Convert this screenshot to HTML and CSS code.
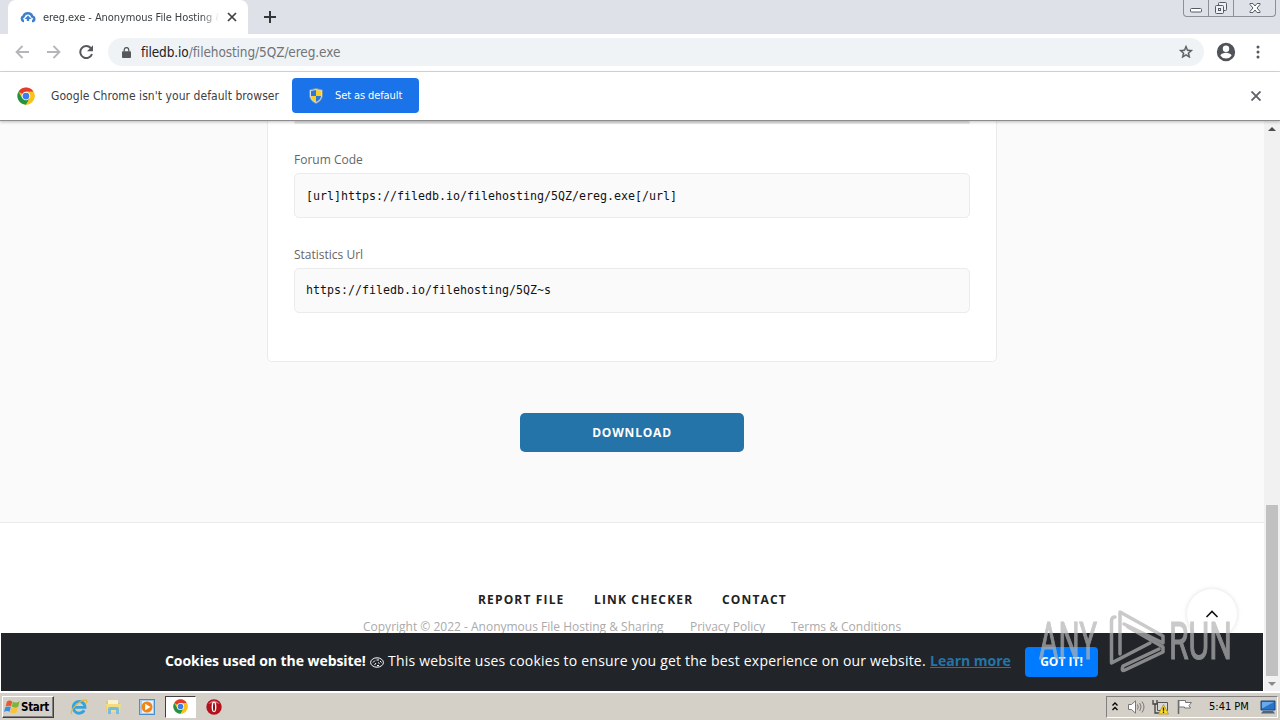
FILE: index.html
```
<!DOCTYPE html>
<html lang="en">
<head>
    <meta charset="UTF-8">
    <meta name="viewport" content="width=device-width, initial-scale=1.0">
    <title>ereg.exe - Anonymous File Hosting &amp; Sharing</title>
    <link rel="stylesheet" href="styles.css">
</head>
<body>
    <svg class="defs" width="0" height="0">
        <symbol id="chrome" viewBox="0 0 48 48">
            <circle cx="24" cy="24" r="23" fill="#fbc116"/>
            <path d="M24 24 4.1 12.5A23 23 0 0 1 43.9 12.5H24z" fill="#e33b2e"/>
            <path d="M4.1 12.5A23 23 0 0 0 24 47l10-17-10-6-10 6z" fill="#229342"/>
            <path d="M24 47A23 23 0 0 0 43.9 12.5H24L34 30z" fill="#fbc116"/>
            <circle cx="24" cy="24" r="11.5" fill="#fff"/>
            <circle cx="24" cy="24" r="9" fill="#3b7ded"/>
        </symbol>
    </svg>

    <div class="tabstrip">
        <div class="tab">
            <svg width="16" height="12" viewBox="0 0 16 12">
                <path d="M4 10H3.500A2.400 2.400 0 0 1 3.400 5.500 4.700 4.700 0 0 1 12.300 5.500a2.400 2.400 0 0 1 .7 4.500H12" fill="none" stroke="#3f7fd0" stroke-width="2.600"/>
                <path d="M8 4.500 4.500 8h2.300v2h2.400V8h2.300z" fill="#3f7fd0"/>
            </svg>
            <span class="tab-title">ereg.exe - Anonymous File Hosting &amp;</span>
            <svg width="10" height="10" viewBox="0 0 10 10"><path d="M1 1l8 8M9 1l-8 8" stroke="#3c4043" stroke-width="1.7"/></svg>
        </div>
        <svg class="new-tab" width="12" height="12" viewBox="0 0 12 12"><path d="M6 0v12M0 6h12" stroke="#35363a" stroke-width="2"/></svg>
        <div class="window-buttons">
            <span><svg width="12" height="16" viewBox="0 0 12 16"><rect x=".5" y="8.5" width="11" height="3.5" rx="1" fill="#fff" stroke="#555b66"/></svg></span>
            <span><svg width="14" height="16" viewBox="0 0 14 16" fill="#eef0f4" stroke="#555b66"><rect x="4.500" y="2.500" width="8" height="8" rx="1"/><rect x="1.500" y="5.500" width="8" height="8" rx="1"/><rect x="4.500" y="8.500" width="2" height="2"/></svg></span>
            <span class="wide"><svg width="12" height="16" viewBox="0 0 12 16"><path d="M1 3.500h3l2 2.500 2-2.500h3v1L8 8l3 3.500v1H8L6 10l-2 2.500H1v-1L4 8 1 4.500z" fill="#fff" stroke="#555b66"/></svg></span>
        </div>
    </div>

    <div class="toolbar">
        <svg width="14" height="14" viewBox="0 0 14 14" fill="none" stroke="#b4b6b9" stroke-width="1.8"><path d="M14 7H1.500M7.500 1l-6 6 6 6"/></svg>
        <svg width="14" height="14" viewBox="0 0 14 14" fill="none" stroke="#b4b6b9" stroke-width="1.800"><path d="M0 7h12.500M6.500 1l6 6-6 6"/></svg>
        <svg width="14" height="14" viewBox="0 0 14 14"><path d="M11.700 3A6 6 0 1 0 13 9" fill="none" stroke="#55585c" stroke-width="2"/><path d="M14 .3v6H8z" fill="#55585c"/></svg>
        <div class="address">
            <svg width="9" height="11" viewBox="0 0 10 12"><rect y="4.500" width="10" height="7.500" rx="1" fill="#55585c"/><path d="M2.500 5V3a2.500 2.500 0 0 1 5 0v2" fill="none" stroke="#55585c" stroke-width="1.400"/></svg>
            <span class="url"><b>filedb.io</b>/filehosting/5QZ/ereg.exe</span>
            <svg width="16" height="16" viewBox="0 0 24 24"><path d="M22 9.240l-7.190-.62L12 2 9.190 8.630 2 9.240l5.460 4.730L5.820 21 12 17.270 18.180 21l-1.630-7.030L22 9.240zM12 15.400l-3.760 2.270 1-4.280-3.320-2.880 4.380-.38L12 6.100l1.710 4.040 4.380.38-3.320 2.880 1 4.280L12 15.400z" fill="#55585c" stroke="#55585c" stroke-width=".6"/></svg>
        </div>
        <svg class="profile" width="22" height="22" viewBox="0 0 24 24"><path d="M12 2a10 10 0 1 0 0 20 10 10 0 0 0 0-20zm0 3a3.500 3.500 0 1 1 0 7 3.500 3.500 0 0 1 0-7zm0 14.200a7.200 7.200 0 0 1-6-3.200c.03-2 4-3.100 6-3.100s5.970 1.100 6 3.100a7.200 7.200 0 0 1-6 3.200z" fill="#505358"/></svg>
        <svg class="menu" width="4" height="14" viewBox="0 0 4 14" fill="#55585c"><circle cx="2" cy="2" r="1.500"/><circle cx="2" cy="7" r="1.500"/><circle cx="2" cy="12" r="1.500"/></svg>
    </div>

    <div class="infobar">
        <svg width="18" height="18"><use href="#chrome"/></svg>
        <span class="infobar-text">Google Chrome isn't your default browser</span>
        <button class="default-button">
            <svg width="14" height="16" viewBox="0 0 14 16">
                <path d="M7 .5 13.500 2v5c0 4-3 7-6.500 8.500C3.500 14 .5 11 .5 7V2z" fill="#d7dfe6" stroke="#7d8fa5"/>
                <path d="M7 2v6H2V3z" fill="#2c78d4"/><path d="M7 2l5 1v5H7z" fill="#f7cf28"/>
                <path d="M2 8h5v6C4 12.500 2 10.500 2 8z" fill="#f7cf28"/><path d="M7 8h5c0 2.500-2 4.500-5 6z" fill="#2c78d4"/>
            </svg>
            <span>Set as default</span>
        </button>
        <svg class="infobar-close" width="10" height="10" viewBox="0 0 10 10"><path d="M.5.5l9 9M9.500.5l-9 9" stroke="#606367" stroke-width="1.900"/></svg>
    </div>

    <div class="viewport">
        <div class="page">
            <main>
                <div class="card">
                    <div class="code-box cut"></div>
                    <label>Forum Code</label>
                    <div class="code-box">[url]https://filedb.io/filehosting/5QZ/ereg.exe[/url]</div>
                    <label>Statistics Url</label>
                    <div class="code-box stats">https://filedb.io/filehosting/5QZ~s</div>
                </div>
                <a class="download">DOWNLOAD</a>
            </main>
            <footer>
                <nav class="footer-links">
                    <a class="report">REPORT FILE</a>
                    <a class="checker">LINK CHECKER</a>
                    <a class="contact">CONTACT</a>
                </nav>
                <div class="copyright">
                    <span class="owner">Copyright © 2022 - Anonymous File Hosting &amp; Sharing</span>
                    <span class="privacy">Privacy Policy</span>
                    <span class="terms">Terms &amp; Conditions</span>
                </div>
            </footer>
            <div class="to-top">
                <svg width="14" height="8" viewBox="0 0 14 8"><path d="M1.500 7 7 1.500 12.500 7" fill="none" stroke="#111" stroke-width="1.600"/></svg>
            </div>
            <div class="cookie-bar">
                <strong>Cookies used on the website!</strong>
                <svg width="14" height="11" viewBox="0 0 14 11" fill="none" stroke="#fff"><ellipse cx="7" cy="5.500" rx="6.400" ry="4.700"/><path d="M3 5.500 5 3.500M4.500 8l1.500-2M6.500 3h2.500M8 5.500l1.500 1M10 4l1.500 1.500M7 8.500h2"/></svg>
                <span class="cookie-text">This website uses cookies to ensure you get the best experience on our website.</span>
                <a class="learn-more">Learn more</a>
                <button class="got-it">GOT IT!</button>
            </div>
        </div>
        <div class="scrollbar">
            <svg width="8" height="4" viewBox="0 0 8 4"><path d="M0 4l4-4 4 4z" fill="#4d4d4d"/></svg>
            <div class="thumb"></div>
            <svg width="8" height="4" viewBox="0 0 8 4"><path d="M0 0l4 4 4-4z" fill="#8a8a8a"/></svg>
        </div>
    </div>

    <div class="taskbar">
        <div class="start">
            <svg width="17" height="15" viewBox="0 0 17 15">
                <path d="M3 2.500C5 1 6.500 1.500 8.300 2.500L7 7.600C5 6.500 3.500 6.600 1.600 7.600z" fill="#e8592b"/>
                <path d="M8.900 2.800c2 1 4 1 6.800-.5L14.200 7.800c-2.300 1.200-4.400 1-6.500 0z" fill="#7db53c"/>
                <path d="M1.300 8.200C3.300 7.200 5 7.200 6.800 8.200l-1.300 4.500C3.700 11.700 2 11.800 0 12.900z" fill="#3b8ede"/>
                <path d="M7.500 8.500c2 1 4.200 1 6.500 0l-1.500 4.900c-2.200 1.100-4.200.9-6.300-.2z" fill="#f8c23a"/>
            </svg>
            <span>Start</span>
        </div>
        <div class="launch">
            <svg width="18" height="18" viewBox="0 0 18 18"><path d="M14.200 12.300A5.900 5.900 0 1 1 15 9.300H4" fill="none" stroke="#36a3dc" stroke-width="2.800"/><path d="M1.500 16C-.5 12 11 1 16 2.200c1 .3 1 1.700.2 3" fill="none" stroke="#e5b83b" stroke-width="1.300"/></svg>
        </div>
        <div class="launch">
            <svg width="17" height="16" viewBox="0 0 17 16"><path d="M1 2h5l1 2h8v9H1z" fill="#e5c668"/><path d="M3 1h10v6H3z" fill="#f9f4cf"/><path d="M1 5h15l-1 8H2z" fill="#f4dc83"/><path d="M3 15V10q0-2 2-2h7q2 0 2 2v5h-3v-4H6v4z" fill="#78bddf"/></svg>
        </div>
        <div class="launch">
            <svg width="16" height="16" viewBox="0 0 16 16"><rect x=".5" y=".5" width="15" height="15" fill="#a9cdec" stroke="#4a8fcb"/><rect x="3" y="2" width="11" height="12" fill="#e8f2fa"/><circle cx="8" cy="8" r="5.500" fill="#f08519"/><path d="M6.200 4.800 11.500 8l-5.300 3.200z" fill="#fff"/></svg>
        </div>
        <div class="launch active"><svg width="15" height="15"><use href="#chrome"/></svg></div>
        <div class="launch">
            <svg width="16" height="16" viewBox="0 0 16 16"><circle cx="8" cy="8" r="7.700" fill="#b3121d"/><path d="M2 5Q8-2 14 5 8 3 2 5z" fill="#dd7077"/><ellipse cx="8" cy="8" rx="2.400" ry="5.200" fill="#fff"/><ellipse cx="8" cy="8" rx="1" ry="4.300" fill="#8f0b15"/></svg>
        </div>
        <div class="tray">
            <svg width="6" height="9" viewBox="0 0 6 9"><path d="M.5 3.500 3 1l2.500 2.500M.5 8 3 5.500 5.500 8" fill="none" stroke="#000" stroke-width="1.300"/></svg>
            <svg class="speaker" width="17" height="14" viewBox="0 0 17 14" fill="none" stroke="#777"><path d="M.5 4.500h3L7.500.8v12.400L3.500 9.500h-3z" fill="#fff"/><path d="M9.500 4.500q1.500 2.500 0 5M11.700 3q2.800 4 0 8M14 1.500q4 5.500 0 11"/></svg>
            <svg class="network" width="17" height="16" viewBox="0 0 17 16"><path d="M5.500 3.500h10v8h-10z" fill="#d9d9d9" stroke="#555"/><path d="M1 1v4h4V1M3 5v9h4" fill="none" stroke="#444" stroke-width="1.300"/><path d="M11.500 5.500 16.500 15h-10z" fill="#ffdc21" stroke="#a58a11" stroke-width=".7"/><path d="M11.500 8.500v3.200M11.500 12.600v1.300" stroke="#222" stroke-width="1.300"/></svg>
            <svg class="flag" width="16" height="15" viewBox="0 0 16 15"><path d="M1.500 15V1" stroke="#666" stroke-width="1.500"/><path d="M2 1.500h6.500v2h6l-2.500 3 1.500 2.500H7.500V8H2z" fill="#fff" stroke="#777"/></svg>
            <span class="clock">5:41 PM</span>
            <svg class="desktop" width="16" height="14" viewBox="0 0 16 14"><path d="M1 1h14v9H1z" fill="#2874c9" stroke="#16457f"/><path d="M2 2h12L3 8H2z" fill="#6aa9ea"/><path d="M3 11h10l2 2.500H1z" fill="#51657b"/></svg>
        </div>
    </div>

    <svg class="watermark" width="196" height="66" viewBox="0 0 196 66">
        <text x="1" y="51" textLength="58" lengthAdjust="spacingAndGlyphs">ANY</text>
        <g fill="none" stroke-width="3.500" stroke-linejoin="round" stroke-linecap="round">
            <path d="M77 9Q73.500 9 73.500 13V55L112 35"/>
            <path d="M82 46V4L125 28V35L86 16"/>
            <path d="M90 19 125 39V44L87 62Q83 64 85 58L121 41"/>
        </g>
        <text x="131" y="51" textLength="63" lengthAdjust="spacingAndGlyphs">RUN</text>
    </svg>
</body>
</html>
```
FILE: styles.css
```
:root {
    --ui-font: "DejaVu Sans Condensed", "DejaVu Sans", sans-serif;
    --page-font: "Open Sans", sans-serif;
}

* {
    box-sizing: border-box;
}

body {
    margin: 0;
    width: 1280px;
    height: 720px;
    overflow: hidden;
    display: flex;
    flex-direction: column;
    background: #fff;
    font-family: var(--ui-font);
}

svg {
    display: block;
    flex: none;
}

button {
    border: none;
    padding: 0;
    font-family: inherit;
}

.defs {
    position: absolute;
}

/* Browser window */
.tabstrip {
    flex: none;
    height: 34px;
    display: flex;
    background: #dee1e8;
    padding-left: 8px;
}

.tab {
    width: 240px;
    background: #fff;
    border-radius: 8px 8px 0 0;
    display: flex;
    align-items: center;
    padding: 0 11px 0 12px;
}

.tab-title {
    width: 176px;
    margin: 0 8px 0 7px;
    overflow: hidden;
    white-space: nowrap;
    font-size: 11px;
    letter-spacing: -0.08px;
    color: #3c4043;
    -webkit-mask-image: linear-gradient(90deg, #000 90%, transparent);
    mask-image: linear-gradient(90deg, #000 90%, transparent);
}

.new-tab {
    margin: 11px 0 0 16px;
}

.window-buttons {
    display: flex;
    width: 93px;
    height: 17px;
    margin-left: auto;
    margin-right: 4px;
    border: 1px solid #8c9099;
    border-top: none;
    border-radius: 0 0 4px 4px;
}

.window-buttons span {
    width: 25px;
    display: flex;
    justify-content: center;
    border-right: 1px solid #8c9099;
}

.window-buttons .wide {
    width: 41px;
    border-right: none;
}

.toolbar {
    flex: none;
    height: 38px;
    display: flex;
    align-items: center;
    gap: 18px;
    padding: 0 20px 1px 15px;
    border-bottom: 1px solid #d9d9db;
}

.address {
    flex: 1;
    height: 28px;
    margin-left: -3px;
    display: flex;
    align-items: center;
    padding: 0 10px 0 14px;
    background: #f0f3f6;
    border-radius: 14px;
}

.url {
    flex: 1;
    margin-left: 10px;
    font-size: 13.5px;
    letter-spacing: -0.1px;
    color: #70757a;
}

.url b {
    font-weight: normal;
    color: #202124;
}

.profile {
    margin-left: -7px;
}

.menu {
    margin-left: 1px;
}

.infobar {
    position: relative;
    z-index: 1;
    flex: none;
    height: 49px;
    display: flex;
    align-items: center;
    padding: 0 19px 1px 17px;
    background: #fff;
    border-bottom: 1px solid #8d8d8d;
    box-shadow: 0 1px 3px rgba(0, 0, 0, 0.25);
}

.infobar-text {
    width: 229px;
    margin: 0 12px 0 16px;
    white-space: nowrap;
    font-size: 12px;
    letter-spacing: 0.06px;
    color: #3c4043;
}

.default-button {
    width: 127px;
    height: 35px;
    display: flex;
    align-items: center;
    gap: 12px;
    padding-left: 17px;
    border-radius: 4px;
    background: #1a73e8;
    color: #fff;
    font-size: 11px;
    letter-spacing: -0.1px;
}

.infobar-close {
    margin-left: auto;
}

/* Web page */
.viewport {
    flex: none;
    height: 570px;
    display: flex;
}

.page {
    position: relative;
    width: 1264px;
    overflow: hidden;
    font-family: var(--page-font);
}

main {
    height: 402px;
    display: flex;
    flex-direction: column;
    align-items: center;
    background: #fafafa;
    border-bottom: 1px solid #ebebeb;
}

.card {
    width: 730px;
    height: 241px;
    padding: 0 26px;
    background: #fff;
    border: 1px solid #ebebeb;
    border-top: none;
    border-radius: 0 0 5px 5px;
}

.card label {
    display: block;
    height: 20px;
    margin-bottom: 3px;
    font-size: 12px;
    line-height: 20px;
    color: #666;
}

.code-box {
    height: 45px;
    margin-bottom: 27px;
    padding-left: 11px;
    background: #fafafa;
    border: 1px solid #ebebeb;
    border-radius: 5px;
    font-family: "DejaVu Sans Mono", monospace;
    font-size: 11.63px;
    line-height: 45px;
    color: #111;
}

.code-box.stats {
    line-height: 43px;
}

.code-box.cut {
    height: 3px;
    margin-bottom: 26px;
    border-top: none;
    background: #e2e2e2;
}

.download {
    width: 224px;
    height: 39px;
    margin-top: 51px;
    border-radius: 5px;
    background: #2574a9;
    color: #fff;
    text-align: center;
    font-size: 12px;
    font-weight: bold;
    line-height: 39px;
    letter-spacing: 0.8px;
}

footer {
    height: 168px;
    padding-top: 67px;
    background: #fff;
}

.footer-links {
    display: flex;
    padding-left: 478px;
    font-size: 12px;
    font-weight: bold;
    line-height: 20px;
    letter-spacing: 1.15px;
    white-space: nowrap;
    color: #222;
}

.report {
    width: 116px;
}

.checker {
    width: 128px;
}

.copyright {
    display: flex;
    padding: 7px 0 0 363px;
    font-size: 12px;
    line-height: 20px;
    white-space: nowrap;
    color: #aaa;
}

.owner {
    width: 327px;
}

.privacy {
    width: 101px;
}

.to-top {
    position: absolute;
    left: 1187px;
    top: 468px;
    width: 50px;
    height: 50px;
    display: flex;
    align-items: center;
    justify-content: center;
    background: #fff;
    border-radius: 50%;
    box-shadow: 0 0 5px rgba(0, 0, 0, 0.13);
}

.cookie-bar {
    position: absolute;
    left: 1px;
    right: 1px;
    bottom: 0;
    height: 58px;
    display: flex;
    align-items: center;
    padding-left: 164px;
    background: #212529;
    color: #fff;
    font-size: 14px;
    line-height: 20px;
    white-space: nowrap;
}

.cookie-bar strong {
    width: 205px;
    margin-top: -3px;
    letter-spacing: -0.06px;
}

.cookie-text {
    width: 542px;
    margin: -3px 0 0 4px;
    letter-spacing: 0.21px;
}

.learn-more {
    width: 95px;
    margin-top: -3px;
    color: #2574a9;
    font-weight: bold;
    text-decoration: underline;
}

.got-it {
    width: 73px;
    height: 30px;
    padding-bottom: 2px;
    border-radius: 4px;
    background: #007bff;
    color: #fff;
    font-size: 12px;
    font-weight: bold;
}

.scrollbar {
    width: 16px;
    display: flex;
    flex-direction: column;
    align-items: center;
    padding: 6px 0 5px;
    background: #f1f1f1;
}

.thumb {
    width: 12px;
    height: 171px;
    margin: auto 0 6px;
    background: #c1c1c1;
}

/* Windows taskbar */
.taskbar {
    flex: 1;
    display: flex;
    align-items: center;
    margin-top: 1px;
    padding: 0 2px;
    background: #d4d0c8;
    border-top: 1px solid #fff;
}

.start {
    width: 52px;
    height: 22px;
    margin-right: 9px;
    display: flex;
    align-items: center;
    padding-left: 1px;
    border: 1px solid;
    border-color: #fff #404040 #404040 #fff;
    box-shadow: inset -1px -1px #808080;
    font-size: 11.5px;
    font-weight: bold;
    letter-spacing: -0.3px;
}

.launch {
    width: 32px;
    height: 22px;
    margin-right: 2px;
    display: flex;
    align-items: center;
    justify-content: center;
}

.launch.active {
    width: 31px;
    background: #fff;
    border: 1px solid;
    border-color: #404040 #fff #fff #404040;
}

.tray {
    width: 172px;
    height: 22px;
    margin-left: auto;
    display: flex;
    align-items: center;
    padding-left: 5px;
    border: 1px solid;
    border-color: #808080 #fff #fff #808080;
}

.speaker {
    margin-left: 10px;
}

.network {
    margin-left: 7px;
}

.flag {
    margin-left: 8px;
}

.clock {
    width: 40px;
    margin-left: 16px;
    font-size: 11px;
    white-space: nowrap;
}

.desktop {
    margin-left: 11px;
}

/* Logo laid over the whole screen */
.watermark {
    position: absolute;
    z-index: 2;
    left: 1038px;
    top: 608px;
    font-family: Roboto, sans-serif;
    font-size: 51px;
    fill: #b4b4b4;
    stroke: #b4b4b4;
    stroke-width: 1.2px;
    opacity: 0.7;
}
```
